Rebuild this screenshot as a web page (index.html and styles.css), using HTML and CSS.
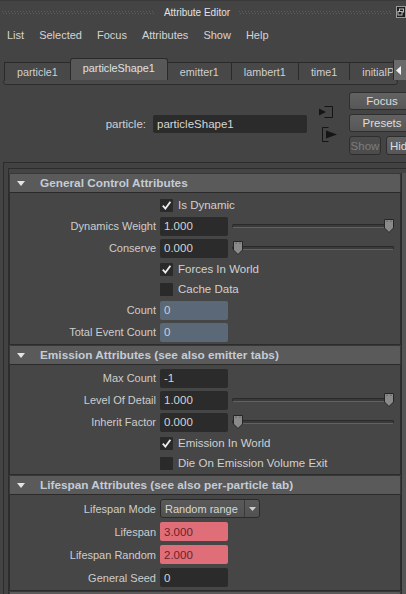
FILE: index.html
```html
<!DOCTYPE html>
<html>
<head>
<meta charset="utf-8">
<link rel="stylesheet" href="styles.css">
</head>
<body>
<div class="win">
  <div class="titlebar">
    <div class="grip"></div>
    <div class="title">Attribute Editor</div>
    <div class="grip"></div>
    <div class="winbtn">
      <svg width="10" height="12" viewBox="0 0 10 12"><rect x="0.5" y="0.5" width="9" height="11" fill="#1e1e1e" stroke="#9a9a9a"/><rect x="3.5" y="3" width="4" height="3" fill="none" stroke="#bdbdbd"/><rect x="2" y="5.5" width="4" height="3.5" fill="#1e1e1e" stroke="#bdbdbd"/></svg>
    </div>
  </div>

  <div class="menubar">
    <span>List</span><span>Selected</span><span>Focus</span><span>Attributes</span><span>Show</span><span>Help</span>
  </div>

  <div class="tabarea">
    <div class="tabstrip">
      <div class="tabs">
        <div class="tab">particle1</div>
        <div class="tab active">particleShape1</div>
        <div class="tab">emitter1</div>
        <div class="tab">lambert1</div>
        <div class="tab">time1</div>
        <div class="tab">initialParticleSE</div>
      </div>
      <div class="tabarrow"><svg width="5" height="9" viewBox="0 0 5 9"><path d="M5 0 L0 4.5 L5 9 Z" fill="#f0f0f0"/></svg></div>
    </div>
    <div class="tabframe"></div>
  </div>

  <div class="nodebar">
    <div class="nodename">
      <span class="nodelabel">particle:</span>
      <div class="nodefield">particleShape1</div>
    </div>
    <div class="nodeicons">
      <svg class="ico1" width="15" height="12" viewBox="0 0 15 12"><path d="M5.5 0.5 H13.5 V11.5 H5.5" fill="none" stroke="#151515"/><path d="M0 2.5 L7 6 L0 9.5 Z" fill="#151515"/></svg>
      <svg class="ico2" width="16" height="15" viewBox="0 0 16 15"><path d="M6.5 0.5 H0.5 V14.5 H6.5" fill="none" stroke="#151515"/><path d="M4 3.5 L15 7.5 L4 11.5 Z" fill="#151515"/></svg>
    </div>
    <div class="nodebtns">
      <div class="btn">Focus</div>
      <div class="btn">Presets</div>
      <div class="btnrow">
        <div class="btn small disabled">Show</div>
        <div class="btn small grow">Hide</div>
      </div>
    </div>
  </div>

  <div class="frame">
    <div class="scroll">
      <div class="sections">

        <div class="section">
          <div class="shead"><span class="tri"></span>General Control Attributes</div>
          <div class="sbody">
            <div class="row check first">
              <span></span>
              <span class="cb on"><svg width="13" height="13" viewBox="0 0 13 13"><path d="M2.8 6.6 L5.4 9.6 L10.4 2.8" fill="none" stroke="#eeeeee" stroke-width="1.8"/></svg></span>
              <span class="cblabel">Is Dynamic</span>
            </div>
            <div class="row field">
              <span class="lbl">Dynamics Weight</span>
              <span class="fld">1.000</span>
              <span class="slider"><span class="track"></span><span class="handle max"><svg width="10" height="14" viewBox="0 0 10 14"><path d="M0.5 0.5 H9.5 V9 L5 13.5 L0.5 9 Z" fill="#8a8a8a" stroke="#262626"/><path d="M3 1.5 V3 M7 1.5 V3" stroke="#5a5a5a"/></svg></span></span>
            </div>
            <div class="row field">
              <span class="lbl">Conserve</span>
              <span class="fld">0.000</span>
              <span class="slider"><span class="track"></span><span class="handle min"><svg width="10" height="14" viewBox="0 0 10 14"><path d="M0.5 0.5 H9.5 V9 L5 13.5 L0.5 9 Z" fill="#8a8a8a" stroke="#262626"/><path d="M3 1.5 V3 M7 1.5 V3" stroke="#5a5a5a"/></svg></span></span>
            </div>
            <div class="row check">
              <span></span>
              <span class="cb on"><svg width="13" height="13" viewBox="0 0 13 13"><path d="M2.8 6.6 L5.4 9.6 L10.4 2.8" fill="none" stroke="#eeeeee" stroke-width="1.8"/></svg></span>
              <span class="cblabel">Forces In World</span>
            </div>
            <div class="row check">
              <span></span>
              <span class="cb"></span>
              <span class="cblabel">Cache Data</span>
            </div>
            <div class="row field">
              <span class="lbl">Count</span>
              <span class="fld ro">0</span>
            </div>
            <div class="row field">
              <span class="lbl">Total Event Count</span>
              <span class="fld ro">0</span>
            </div>
          </div>
        </div>

        <div class="section">
          <div class="shead"><span class="tri"></span>Emission Attributes (see also emitter tabs)</div>
          <div class="sbody">
            <div class="row field">
              <span class="lbl">Max Count</span>
              <span class="fld">-1</span>
            </div>
            <div class="row field">
              <span class="lbl">Level Of Detail</span>
              <span class="fld">1.000</span>
              <span class="slider"><span class="track"></span><span class="handle max"><svg width="10" height="14" viewBox="0 0 10 14"><path d="M0.5 0.5 H9.5 V9 L5 13.5 L0.5 9 Z" fill="#8a8a8a" stroke="#262626"/><path d="M3 1.5 V3 M7 1.5 V3" stroke="#5a5a5a"/></svg></span></span>
            </div>
            <div class="row field">
              <span class="lbl">Inherit Factor</span>
              <span class="fld">0.000</span>
              <span class="slider"><span class="track"></span><span class="handle min"><svg width="10" height="14" viewBox="0 0 10 14"><path d="M0.5 0.5 H9.5 V9 L5 13.5 L0.5 9 Z" fill="#8a8a8a" stroke="#262626"/><path d="M3 1.5 V3 M7 1.5 V3" stroke="#5a5a5a"/></svg></span></span>
            </div>
            <div class="row check">
              <span></span>
              <span class="cb on"><svg width="13" height="13" viewBox="0 0 13 13"><path d="M2.8 6.6 L5.4 9.6 L10.4 2.8" fill="none" stroke="#eeeeee" stroke-width="1.8"/></svg></span>
              <span class="cblabel">Emission In World</span>
            </div>
            <div class="row check">
              <span></span>
              <span class="cb"></span>
              <span class="cblabel">Die On Emission Volume Exit</span>
            </div>
          </div>
        </div>

        <div class="section">
          <div class="shead"><span class="tri"></span>Lifespan Attributes (see also per-particle tab)</div>
          <div class="sbody">
            <div class="row field tall">
              <span class="lbl">Lifespan Mode</span>
              <span class="dropdown"><span class="ddtext">Random range</span><span class="ddarrow"><svg width="7" height="4" viewBox="0 0 7 4"><path d="M0 0 H7 L3.5 4 Z" fill="#cfcfcf"/></svg></span></span>
            </div>
            <div class="row field tall">
              <span class="lbl">Lifespan</span>
              <span class="fld pink">3.000</span>
            </div>
            <div class="row field tall">
              <span class="lbl">Lifespan Random</span>
              <span class="fld pink">2.000</span>
            </div>
            <div class="row field tall">
              <span class="lbl">General Seed</span>
              <span class="fld">0</span>
            </div>
          </div>
        </div>

        <div class="section">
          <div class="shead"><span class="tri"></span></div>
        </div>

      </div>
      <div class="vscroll"></div>
    </div>
  </div>
</div>
</body>
</html>
```

FILE: styles.css
```css
* { box-sizing: border-box; }
html, body {
  margin: 0;
  padding: 0;
  background: #444444;
  overflow: hidden;
}
body {
  font-family: "Liberation Sans", Arial, sans-serif;
  font-size: 11px;
  color: #d0d0d0;
  width: 406px;
  height: 594px;
}
.win {
  width: 406px;
  height: 594px;
  overflow: hidden;
}

/* title bar */
.titlebar {
  height: 23px;
  display: flex;
  align-items: center;
  padding-left: 2px;
  border-top: 1px solid #3a3a3a;
}
.grip {
  flex: 1;
  height: 3px;
  background-image:
    linear-gradient(90deg, #5e5e5e 1px, transparent 1px),
    linear-gradient(90deg, #5e5e5e 1px, transparent 1px);
  background-size: 3px 1px, 3px 1px;
  background-position: 0 0, 1px 2px;
  background-repeat: repeat-x;
}
.title {
  font-size: 10px;
  color: #e2e2e2;
  padding: 0 9px;
}
.winbtn {
  width: 10px;
  height: 12px;
  margin-left: 4px;
  margin-top: -1px;
  display: flex;
}

/* menu */
.menubar {
  height: 24px;
  display: flex;
  align-items: center;
  gap: 15px;
  padding-left: 7px;
  font-size: 11px;
  color: #d4d4d4;
}

/* tabs */
.tabarea {
  padding-top: 11px;
}
.tabstrip {
  display: flex;
  height: 22px;
  margin-left: 4px;
}
.tabs {
  flex: 1;
  display: flex;
  align-items: flex-end;
  overflow: hidden;
  min-width: 0;
}
.tab {
  height: 18px;
  padding: 0 12px;
  display: flex;
  align-items: center;
  white-space: nowrap;
  background: #484848;
  border: 1px solid #2a2a2a;
  border-bottom: none;
  margin-right: -1px;
  color: #cfcfcf;
  flex-shrink: 0;
  font-size: 10.8px;
}
.tab.active {
  height: 22px;
  background: #585858;
  border-radius: 3px 3px 0 0;
  color: #e0e0e0;
  padding-bottom: 3px;
  position: relative;
  z-index: 1;
}
.tabarrow {
  width: 13px;
  height: 20px;
  margin-top: 2px;
  background: #6a6a6a;
  border-left: 1px solid #2a2a2a;
  display: flex;
  align-items: center;
  padding-left: 2px;
}
.tabframe {
  margin: -1px 0 0 3px;
  height: 6px;
  border: 1px solid #2c2c2c;
  border-radius: 3px;
  background: #4a4a4a;
  width: 395px;
}

/* node bar */
.nodebar {
  height: 77px;
  display: flex;
  align-items: center;
  padding: 7px 0;
  margin-right: -9px;
}
.nodename {
  flex: 1;
  display: flex;
  align-items: center;
  justify-content: flex-end;
}
.nodelabel {
  color: #d0d0d0;
  font-size: 11.5px;
}
.nodefield {
  width: 154px;
  height: 18px;
  margin-left: 7px;
  background: #2b2b2b;
  border-radius: 2px;
  padding-left: 4px;
  display: flex;
  align-items: center;
  font-size: 11.5px;
  color: #d6d6d6;
}
.nodeicons {
  width: 19px;
  margin-left: 12px;
  display: flex;
  flex-direction: column;
  gap: 9px;
}
.ico2 { margin-left: 3px; }
.nodebtns {
  width: 66px;
  margin-left: 11px;
  display: flex;
  flex-direction: column;
  gap: 4px;
}
.btn {
  height: 18px;
  background: linear-gradient(#626262, #575757);
  border: 1px solid #2e2e2e;
  border-radius: 3px;
  display: flex;
  align-items: center;
  justify-content: center;
  color: #dedede;
  font-size: 11.5px;
}
.btnrow {
  display: flex;
  gap: 5px;
  height: 19px;
}
.btn.small { height: 19px; }
.btn.disabled {
  width: 32px;
  background: #4c4c4c;
  color: #7c7c7c;
}
.btn.grow { flex: 1; justify-content: flex-start; padding-left: 3px; }

/* frame */
.frame {
  margin-left: 3px;
  border-top: 1px solid #2c2c2c;
  border-left: 1px solid #2c2c2c;
  padding: 5px 0 0 4px;
  background: #424242;
}
.scroll {
  display: flex;
  border-left: 1px solid #2c2c2c;
  border-top: 1px solid #2c2c2c;
  background: #444444;
}
.sections {
  flex: 1;
  padding-top: 4px;
  min-width: 0;
}
.vscroll {
  width: 5px;
  margin-top: 4px;
  border-left: 1px solid #2a2a2a;
  background: #555555;
}

.section {
  display: flex;
  flex-direction: column;
}
.shead {
  height: 20px;
  background: #5a5a5a;
  border: 1px solid #383838;
  border-bottom-color: #2a2a2a;
  border-radius: 2px 2px 0 0;
  display: flex;
  align-items: center;
  padding-left: 7px;
  font-weight: bold;
  font-size: 11.8px;
  color: #c4ccd6;
  white-space: nowrap;
}
.tri {
  width: 0;
  height: 0;
  border-left: 4px solid transparent;
  border-right: 4px solid transparent;
  border-top: 5px solid #e4e4e4;
  margin-right: 15px;
}
.sbody {
  border: 1px solid #2c2c2c;
  border-top: none;
  background: #464646;
  padding: 2px 0 1px;
}

.row {
  display: grid;
  grid-template-columns: 150px 68px 1fr;
  align-items: center;
}
.row.field { height: 22px; }
.row.check { height: 20px; }
.row.tall { height: 23px; }
.lbl {
  text-align: right;
  padding-right: 4px;
  color: #cdcdcd;
  white-space: nowrap;
}
.fld {
  height: 19px;
  background: #2b2b2b;
  border-radius: 2px;
  padding-left: 4px;
  display: flex;
  align-items: center;
  color: #d4d4d4;
  font-size: 11.5px;
}
.fld.ro {
  background: #5b6877;
  color: #c9d1da;
}
.fld.pink {
  background: #df6e79;
  color: #6a2228;
}
.cb {
  width: 13px;
  height: 13px;
  background: #2a2a2a;
  border-radius: 1px;
  display: flex;
}
.cblabel {
  grid-column: 3;
  margin-left: -50px;
  white-space: nowrap;
  color: #d0d0d0;
  font-size: 11.5px;
}
.slider {
  height: 14px;
  margin: 0 6px 0 4px;
  display: flex;
  align-items: center;
  position: relative;
}
.track {
  flex: 1;
  height: 4px;
  border-radius: 2px;
  background: #3a3a3a;
  border: 1px solid #2a2a2a;
  border-bottom-color: #626262;
}
.handle {
  position: absolute;
  top: 0;
  width: 10px;
  height: 14px;
  display: flex;
}
.handle.max { right: 0; }
.handle.min { left: 1px; }

.dropdown {
  grid-column: 2 / 4;
  width: 100px;
  height: 19px;
  background: linear-gradient(#5a5a5a, #515151);
  border: 1px solid #2b2b2b;
  border-radius: 3px;
  display: flex;
  align-items: center;
  font-size: 11px;
  color: #d6d6d6;
}
.ddtext {
  flex: 1;
  padding-left: 4px;
  white-space: nowrap;
  overflow: hidden;
}
.ddarrow {
  width: 15px;
  height: 100%;
  border-left: 1px solid #3a3a3a;
  display: flex;
  align-items: center;
  justify-content: center;
}
```
